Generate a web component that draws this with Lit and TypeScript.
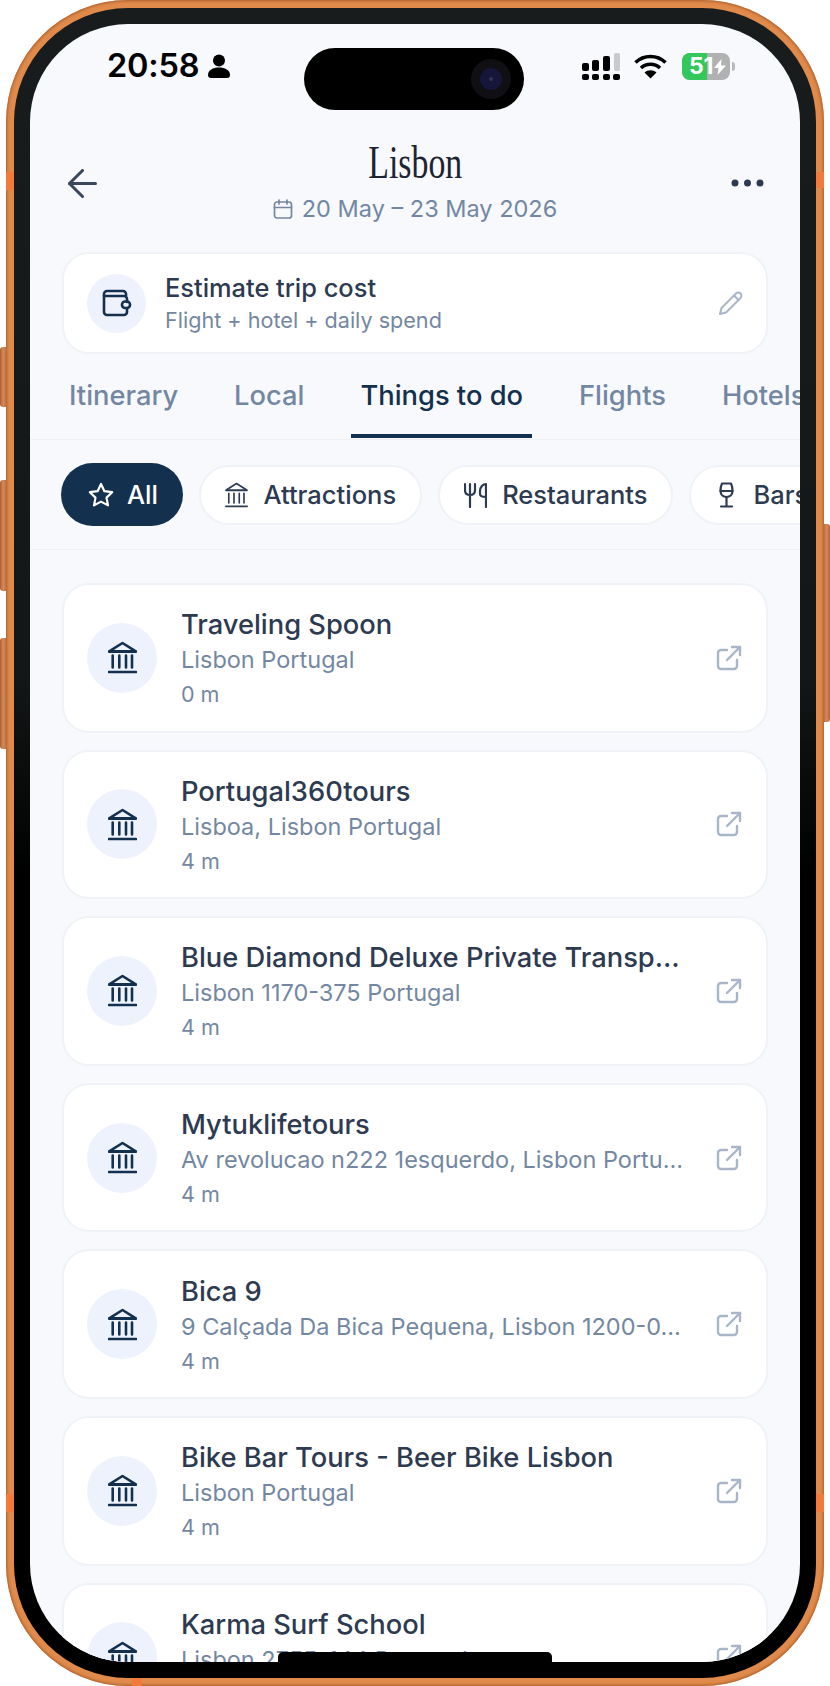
import { LitElement, html, css } from "lit";
import { customElement } from "lit/decorators.js";

const bank = (w: number, h: number, sw: number) => html`<svg width=${w} height=${h} viewBox="0 0 29 33" fill="none" stroke="currentColor" stroke-width=${sw} stroke-linecap="round" stroke-linejoin="round"><path d="M1.500 10.500h26" stroke-width=${sw + 0.6} /><path d="M2 9.800 14.500 2 27 9.800" /><path d="M4.700 14.500v12M11.300 14.500v12M18 14.500v12M24 14.500v12" /><path d="M1 31h27" /></svg>`;

const ext = html`<svg width="28" height="28" viewBox="0 0 28 28" fill="none" stroke="#a9b6c8" stroke-width="2.400" stroke-linecap="round" stroke-linejoin="round"><path d="M12 6H6a3 3 0 0 0-3 3v13a3 3 0 0 0 3 3h13a3 3 0 0 0 3-3v-6" /><path d="M17 3h8v8" /><path d="M25 3 12 16" /></svg>`;

const items = [
  ["Traveling Spoon", "Lisbon Portugal", "0 m"],
  ["Portugal360tours", "Lisboa, Lisbon Portugal", "4 m"],
  ["Blue Diamond Deluxe Private Transp…", "Lisbon 1170-375 Portugal", "4 m"],
  ["Mytuklifetours", "Av revolucao n222 1esquerdo, Lisbon Portu…", "4 m"],
  ["Bica 9", "9 Calçada Da Bica Pequena, Lisbon 1200-0…", "4 m"],
  ["Bike Bar Tours - Beer Bike Lisbon", "Lisbon Portugal", "4 m"],
  ["Karma Surf School", "Lisbon 2755-144 Portugal", "4 m"],
];

@customElement("app-root")
export class AppRoot extends LitElement {
  static styles = css`
    :host { display: block; width: 830px; height: 1686px; background: #fff; font-family: Inter, "Noto Sans", sans-serif; overflow: hidden; }
    .stage { position: relative; width: 830px; height: 1686px; padding: 0 6px; box-sizing: border-box; }
    .btn { position: absolute; width: 7px; background: linear-gradient(90deg, #a9602f, #d68a5f 45%, #b4683a); border-radius: 3px 0 0 3px; }
    .btn.r { border-radius: 0 3px 3px 0; }
    .b1 { left: 0; top: 347px; height: 60px; }
    .b2 { left: 0; top: 480px; height: 111px; }
    .b3 { left: 0; top: 638px; height: 111px; }
    .b4 { right: 0; top: 524px; height: 198px; }
    .band { position: absolute; background: #f27a3a; z-index: 1; }
    .bl1 { left: 6px; width: 8px; top: 172px; height: 18px; }
    .br1 { right: 6px; width: 8px; top: 172px; height: 16px; }
    .bl2 { left: 6px; width: 8px; top: 1494px; height: 18px; }
    .br2 { right: 6px; width: 8px; top: 1494px; height: 18px; }
    .bb { left: 132px; width: 10px; bottom: 0; height: 8px; }
    .frame { position: relative; height: 100%; box-sizing: border-box; padding: 8px; border-radius: 122px; background: #e08a4c; box-shadow: inset 0 0 3px 1px #a95c28; }
    .bezel { height: 100%; box-sizing: border-box; padding: 16px; border-radius: 114px; background: linear-gradient(180deg, #191c1c 0%, #141717 40%, #000 52%); }
    .screen { position: relative; height: 100%; border-radius: 98px; overflow: hidden; background: #f7f9fc; display: flex; flex-direction: column; }
    .island { position: absolute; left: 274px; top: 24px; width: 220px; height: 62px; border-radius: 31px; background: #000; z-index: 3; }
    .cam { position: absolute; right: 13px; top: 11px; width: 40px; height: 40px; border-radius: 50%; background: #0f0f14; display: flex; align-items: center; justify-content: center; }
    .lens { width: 22px; height: 22px; border-radius: 50%; background: #16163a; display: flex; align-items: center; justify-content: center; }
    .lens i { width: 4px; height: 4px; border-radius: 50%; background: #34345a; }
    .home { position: absolute; left: 248px; bottom: 0; width: 274px; height: 10px; border-radius: 5px 5px 0 0; background: #000; z-index: 3; }

    .status { height: 84px; flex: none; display: flex; align-items: center; padding: 0 65px 0 77px; color: #000; }
    .time { font-size: 32.5px; font-weight: 600; letter-spacing: -0.2px; line-height: 40px; }
    .person { margin-left: 9px; }
    .sicons { margin-left: auto; display: flex; align-items: center; }
    .wifi { margin-left: 14px; }
    .batt { margin-left: 15px; position: relative; width: 53px; height: 27px; }
    .battbody { width: 48px; height: 27px; border-radius: 8px; overflow: hidden; display: flex; background: #b0b1b3; }
    .battfill { width: 25px; height: 27px; background: #34c759; }
    .battnub { position: absolute; right: 0; top: 9px; width: 3px; height: 9px; border-radius: 0 3px 3px 0; background: #b8b9bb; }
    .batttext { position: absolute; left: 7px; top: 0; font-size: 23px; line-height: 27px; font-weight: 700; color: #fff; letter-spacing: -0.3px; }
    .bolt { position: absolute; left: 32px; top: 6px; }

    .head { flex: none; padding: 32px 32px 0; display: flex; align-items: center; justify-content: space-between; height: 84px; margin-bottom: 28px; }
    .back { width: 31px; margin: 2px 0 0 6px; display: flex; }
    .dots { width: 33px; margin: 2px 4px 0 0; display: flex; }
    .mid { display: flex; flex-direction: column; align-items: center; }
    .city { font-family: "Liberation Serif", serif; font-size: 47px; line-height: 44px; color: #1c2432; transform: scaleX(0.72); }
    .date { margin-top: 10px; display: flex; align-items: center; gap: 9px; color: #7487a2; font-size: 23.5px; line-height: 30px; }

    .cost { flex: none; margin: 0 32px; height: 102px; box-sizing: border-box; border: 2px solid #eff2f7; border-radius: 27px; background: #fff; display: flex; align-items: center; padding: 0 22px 0 23px; }
    .cic { width: 59px; height: 59px; border-radius: 50%; background: #eef2fd; display: flex; align-items: center; justify-content: center; flex: none; color: #14304f; }
    .ctext { margin: 0 0 0 19px; flex: 1; }
    .ct { font-size: 25.4px; font-weight: 500; line-height: 34px; color: #2d3a50; }
    .cs { font-size: 21.6px; line-height: 30px; color: #7487a2; }

    .tabs { flex: none; display: flex; gap: 38px; padding-left: 30px; border-bottom: 1px solid #eef1f5; overflow: hidden; }
    .tab { padding: 27px 9px 24px; line-height: 29px; font-size: 27.3px; font-weight: 500; color: #7487a2; border-bottom: 4px solid transparent; white-space: nowrap; margin-bottom: 1px; }
    .tab.on { color: #14304f; border-bottom-color: #14304f; }

    .chips { flex: none; height: 110px; box-sizing: border-box; border-bottom: 1px solid #eef1f5; display: flex; align-items: center; gap: 16px; padding-left: 31px; overflow: hidden; }
    .chip { flex: none; height: 60px; box-sizing: border-box; border: 2px solid #eff2f7; border-radius: 30px; background: #fff; display: flex; align-items: center; gap: 15px; padding: 0 23.5px; font-size: 25.5px; font-weight: 500; color: #2d3a50; }
    .chip.on { height: 63px; border: 0; border-radius: 32px; background: #14304f; color: #fff; padding: 0 25px 0 27px; gap: 13px; }
    .cbox { width: 24px; display: flex; justify-content: center; }

    .list { padding: 33px 32px 0; display: flex; flex-direction: column; gap: 17px; flex: none; }
    .card { height: 149.6px; box-sizing: border-box; flex: none; border: 2px solid #eff2f7; border-radius: 27px; background: #fff; display: flex; align-items: center; padding: 0 23px; }
    .ic { width: 70px; height: 70px; border-radius: 50%; background: #eef2fd; color: #14304f; display: flex; align-items: center; justify-content: center; flex: none; }
    .tx { margin: 3px 0 0 24px; flex: 1; min-width: 0; }
    .t { font-size: 27.3px; font-weight: 500; line-height: 34px; color: #2d3a50; white-space: nowrap; overflow: hidden; text-overflow: ellipsis; }
    .s, .d { font-size: 23.5px; line-height: 36px; color: #7487a2; white-space: nowrap; overflow: hidden; text-overflow: ellipsis; }
    .d { font-size: 21.5px; line-height: 32px; }
    .x { flex: none; display: flex; margin-left: 24px; }
  `;

  render() {
    return html`<div class="stage">
      <div class="btn b1"></div><div class="btn b2"></div><div class="btn b3"></div><div class="btn r b4"></div>
      <div class="band bl1"></div><div class="band br1"></div><div class="band bl2"></div><div class="band br2"></div><div class="band bb"></div>
      <div class="frame"><div class="bezel"><div class="screen">
        <div class="island"><div class="cam"><div class="lens"><i></i></div></div></div>
        <div class="status">
          <span class="time">20:58</span>
          <svg class="person" width="22" height="24" viewBox="0 0 22 24" fill="#000"><circle cx="11" cy="6.500" r="6"/><path d="M0 21c0-5 5-7.500 11-7.500S22 16 22 21c0 2-1 3-3 3H3c-2 0-3-1-3-3z"/></svg>
          <div class="sicons">
            <svg width="38" height="27" viewBox="0 0 38 27" fill="#000">
              <rect x="0" y="21" width="7" height="6" rx="2"/><rect x="10" y="21" width="7" height="6" rx="2"/><rect x="21" y="21" width="7" height="6" rx="2"/><rect x="31" y="21" width="7" height="6" rx="2"/>
              <rect x="0" y="10" width="7" height="8" rx="2"/><rect x="10" y="7" width="7" height="11" rx="2"/><rect x="21" y="3" width="7" height="15" rx="2"/><rect x="32" y="0" width="6" height="18" rx="2" fill="#c9cacb"/>
            </svg>
            <svg class="wifi" width="33" height="25" viewBox="0 0 33 25" fill="none" stroke="#000" stroke-width="3.600" stroke-linecap="butt"><path d="M1.500 8.500C10 .5 23 .5 31.500 8.500"/><path d="M7 14c5.500-5 13.500-5 19 0"/><path d="M16.500 24.500 10.500 18.500c3.500-3 8.500-3 12 0z" fill="#000" stroke="none"/></svg>
            <div class="batt">
              <div class="battbody"><div class="battfill"></div></div>
              <div class="battnub"></div>
              <span class="batttext">51</span>
              <svg class="bolt" width="12" height="16" viewBox="0 0 12 16" fill="#fff"><path d="M7.500 0 0 9h4.500L3.500 16 12 6.500H7z"/></svg>
            </div>
          </div>
        </div>
        <div class="head">
          <div class="back"><svg width="29" height="29" viewBox="0 0 29 29" fill="none" stroke="#3a4659" stroke-width="3" stroke-linecap="round" stroke-linejoin="round"><path d="M27.500 14.500H1.500"/><path d="M14.500 1.500 1.500 14.500 14.500 27.500"/></svg></div>
          <div class="mid">
            <div class="city">Lisbon</div>
            <div class="date">
              <svg width="20" height="20" viewBox="0 0 20 20" fill="none" stroke="#7487a2" stroke-width="1.700" stroke-linecap="round" stroke-linejoin="round"><rect x="1.500" y="3" width="17" height="16" rx="2.500"/><path d="M1.500 8.500h17M6 1v4M14 1v4"/></svg>
              <span>20 May – 23 May 2026</span>
            </div>
          </div>
          <div class="dots"><svg width="33" height="8" viewBox="0 0 33 8" fill="#2d3a50"><circle cx="4" cy="4" r="3.500"/><circle cx="16.500" cy="4" r="3.500"/><circle cx="29" cy="4" r="3.500"/></svg></div>
        </div>
        <div class="cost">
          <div class="cic"><svg width="30" height="28" viewBox="0 0 30 28" fill="none" stroke="currentColor" stroke-width="2.600" stroke-linecap="round" stroke-linejoin="round"><path d="M24 7V5a3 3 0 0 0-3-3H5a3 3 0 0 0-3 3v18a3 3 0 0 0 3 3h17a3 3 0 0 0 3-3v-4"/><path d="M2 7h20a3 3 0 0 1 3 3v3"/><rect x="20" y="12.500" width="8" height="6.500" rx="3"/></svg></div>
          <div class="ctext"><div class="ct">Estimate trip cost</div><div class="cs">Flight + hotel + daily spend</div></div>
          <svg width="26" height="26" viewBox="0 0 26 26" fill="none" stroke="#a9b6c8" stroke-width="2" stroke-linecap="round" stroke-linejoin="round"><path d="M2 24l1.500-6L18 3.500a2.800 2.800 0 0 1 4.500 4.500L8 22.500z"/><path d="M16 5.500l4.500 4.500"/></svg>
        </div>
        <div class="tabs">
          <div class="tab">Itinerary</div><div class="tab">Local</div><div class="tab on">Things to do</div><div class="tab">Flights</div><div class="tab">Hotels</div>
        </div>
        <div class="chips">
          <div class="chip on"><svg width="26" height="26" viewBox="0 0 26 26" fill="none" stroke="#fff" stroke-width="2.200" stroke-linejoin="round"><path d="M13 2l3.400 7.200 7.800 1-5.700 5.400 1.500 7.800L13 19.600l-7 3.800 1.500-7.800-5.700-5.400 7.800-1z"/></svg>All</div>
          <div class="chip"><span class="cbox">${bank(23, 26, 2.1)}</span>Attractions</div>
          <div class="chip"><span class="cbox"><svg width="23" height="26" viewBox="0 0 23 26" fill="none" stroke="currentColor" stroke-width="2.200" stroke-linecap="round" stroke-linejoin="round"><path d="M1 2v6c0 3 2 5 5 5s5-2 5-5V2M6 2v23"/><path d="M22 25V2c-3 0-6 3-6 7v3c0 2 1.500 3 6 3"/></svg></span>Restaurants</div>
          <div class="chip"><span class="cbox"><svg width="15" height="26" viewBox="0 0 15 26" fill="none" stroke="currentColor" stroke-width="2.200" stroke-linecap="round" stroke-linejoin="round"><path d="M3 1.500h9c1 2 1.500 5 1.500 7.500 0 3.500-2.500 6-6 6s-6-2.500-6-6C1.500 6.500 2 3.500 3 1.500z"/><path d="M1.500 9h12M7.500 15v9.500M2 24.500h11"/></svg></span>Bars</div>
        </div>
        <div class="list">
          ${items.map(([t, s, d]) => html`<div class="card">
            <div class="ic">${bank(29, 33, 2.6)}</div>
            <div class="tx"><div class="t">${t}</div><div class="s">${s}</div><div class="d">${d}</div></div>
            <div class="x">${ext}</div>
          </div>`)}
        </div>
        <div class="home"></div>
      </div></div></div>
    </div>`;
  }
}
